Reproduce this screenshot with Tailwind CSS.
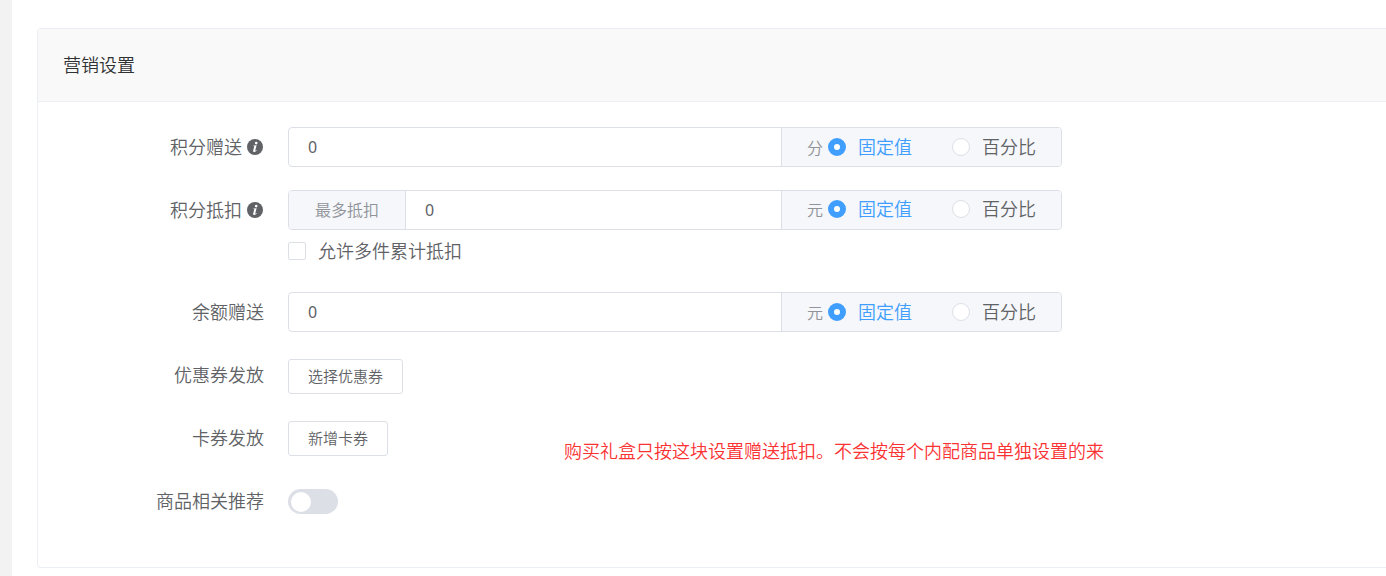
<!DOCTYPE html>
<html lang="zh-CN">
<head>
<meta charset="utf-8">
<meta name="viewport" content="width=device-width, initial-scale=1">
<title>营销设置</title>
<script src="https://cdn.jsdelivr.net/npm/@tailwindcss/browser@4"></script>
</head>
<body class="relative min-h-screen overflow-x-hidden bg-white pb-2 font-['Noto_Sans_CJK_SC',sans-serif] text-[18px] leading-[38px] font-[350] text-[#606266] flex">
<aside class="w-3 shrink-0 -mb-2 bg-[#f2f2f2]"></aside>
<main class="grow pt-7 pl-[25px]">
  <section class="rounded-l border border-r-0 border-[#ebeef5]">
    <header class="border-b border-[#ebeef5] bg-[#f9f9f9] px-[25px] pt-4 pb-[18px] text-[#303133]"><h2>营销设置</h2></header>
    <form class="flex flex-col gap-[23px] pt-[25px] pb-[46px]">

      <div class="flex">
        <label for="points" class="flex h-10 w-[226px] shrink-0 items-center justify-end gap-[5px] pr-px pb-0.5">积分赠送
          <svg class="mt-0.5 size-4" viewBox="0 0 16 16"><circle cx="8" cy="8" r="8" fill="#606266"/><circle cx="9.2" cy="4.1" r="1.3" fill="#fff"/><path d="M5.9 6.7 9.6 6.2 8.3 11.2q-.1.7.4.5l.8-.8.4.4q-1.3 1.8-2.8 1.7-1.3-.1-.9-1.6l1-3.8q.1-.5-.3-.5h-1z" fill="#fff"/></svg>
        </label>
        <div class="ml-6 flex h-10 w-full max-w-[774px] overflow-hidden rounded border border-[#dcdfe6]">
          <input id="points" type="text" value="0" class="min-w-0 grow px-[19px] font-['Noto_Sans',sans-serif] text-[16px] font-normal outline-none">
          <div class="flex shrink-0 items-center border-l border-[#dcdfe6] bg-[#f5f7fa] px-[25px] text-[16px] text-[#909399]">
            <span class="mr-[5px]">分</span>
            <label class="mr-10 flex items-center gap-3 pb-0.5 text-[18px] text-[#409eff]"><input type="radio" name="points-type" checked class="mt-0.5 size-[18px] appearance-none rounded-full border border-[#dcdfe6] bg-white checked:border-[6px] checked:border-[#409eff]">固定值</label>
            <label class="flex items-center gap-3 pb-0.5 text-[18px] text-[#606266]"><input type="radio" name="points-type" class="mt-0.5 size-[18px] appearance-none rounded-full border border-[#dcdfe6] bg-white checked:border-[6px] checked:border-[#409eff]">百分比</label>
          </div>
        </div>
      </div>

      <div class="flex">
        <label for="deduct" class="flex h-10 w-[226px] shrink-0 items-center justify-end gap-[5px] pr-px pb-0.5">积分抵扣
          <svg class="mt-0.5 size-4" viewBox="0 0 16 16"><circle cx="8" cy="8" r="8" fill="#606266"/><circle cx="9.2" cy="4.1" r="1.3" fill="#fff"/><path d="M5.9 6.7 9.6 6.2 8.3 11.2q-.1.7.4.5l.8-.8.4.4q-1.3 1.8-2.8 1.7-1.3-.1-.9-1.6l1-3.8q.1-.5-.3-.5h-1z" fill="#fff"/></svg>
        </label>
        <div class="ml-6 w-full max-w-[774px]">
          <div class="flex h-10 overflow-hidden rounded border border-[#dcdfe6]">
            <span class="flex shrink-0 items-center border-r border-[#dcdfe6] bg-[#f5f7fa] px-[26px] pb-0.5 text-[16px] text-[#909399]">最多抵扣</span>
            <input id="deduct" type="text" value="0" class="min-w-0 grow px-[19px] font-['Noto_Sans',sans-serif] text-[16px] font-normal outline-none">
            <div class="flex shrink-0 items-center border-l border-[#dcdfe6] bg-[#f5f7fa] px-[25px] pb-0.5 text-[16px] text-[#909399]">
              <span class="mr-[5px]">元</span>
              <label class="mr-10 flex items-center gap-3 pb-0.5 text-[18px] text-[#409eff]"><input type="radio" name="deduct-type" checked class="mt-0.5 size-[18px] appearance-none rounded-full border border-[#dcdfe6] bg-white checked:border-[6px] checked:border-[#409eff]">固定值</label>
              <label class="flex items-center gap-3 pb-0.5 text-[18px] text-[#606266]"><input type="radio" name="deduct-type" class="mt-0.5 size-[18px] appearance-none rounded-full border border-[#dcdfe6] bg-white checked:border-[6px] checked:border-[#409eff]">百分比</label>
            </div>
          </div>
          <label class="flex h-[39px] w-fit items-center gap-3 pt-px"><input type="checkbox" class="mt-px size-[18px] appearance-none rounded-[2px] border border-[#dcdfe6] bg-white checked:border-[#409eff] checked:bg-[#409eff]">允许多件累计抵扣</label>
        </div>
      </div>

      <div class="flex">
        <label for="balance" class="w-[226px] shrink-0 text-right">余额赠送</label>
        <div class="ml-6 flex h-10 w-full max-w-[774px] overflow-hidden rounded border border-[#dcdfe6]">
          <input id="balance" type="text" value="0" class="min-w-0 grow px-[19px] font-['Noto_Sans',sans-serif] text-[16px] font-normal outline-none">
          <div class="flex shrink-0 items-center border-l border-[#dcdfe6] bg-[#f5f7fa] px-[25px] text-[16px] text-[#909399]">
            <span class="mr-[5px]">元</span>
            <label class="mr-10 flex items-center gap-3 pb-0.5 text-[18px] text-[#409eff]"><input type="radio" name="balance-type" checked class="mt-0.5 size-[18px] appearance-none rounded-full border border-[#dcdfe6] bg-white checked:border-[6px] checked:border-[#409eff]">固定值</label>
            <label class="flex items-center gap-3 pb-0.5 text-[18px] text-[#606266]"><input type="radio" name="balance-type" class="mt-0.5 size-[18px] appearance-none rounded-full border border-[#dcdfe6] bg-white checked:border-[6px] checked:border-[#409eff]">百分比</label>
          </div>
        </div>
      </div>

      <div class="flex h-10">
        <label for="coupon" class="w-[226px] shrink-0 text-right">优惠券发放</label>
        <div class="ml-6 flex items-start pt-1"><button id="coupon" type="button" class="h-[35px] rounded-[3px] border border-[#dcdfe6] bg-white px-[19px] pb-0.5 text-[15px] leading-none">选择优惠券</button></div>
      </div>

      <div class="flex h-10">
        <label for="card" class="w-[226px] shrink-0 text-right">卡券发放</label>
        <div class="ml-6 flex items-start pt-[3px]"><button id="card" type="button" class="h-[35px] rounded-[3px] border border-[#dcdfe6] bg-white px-[19px] pb-0.5 text-[15px] leading-none">新增卡券</button></div>
      </div>

      <div class="flex h-10">
        <label for="related" class="w-[226px] shrink-0 text-right">商品相关推荐</label>
        <div class="ml-6 flex items-start pt-2"><input id="related" type="checkbox" role="switch" class="h-[25px] w-[50px] appearance-none rounded-full bg-[#dcdfe6] p-[3px] before:block before:size-5 before:rounded-full before:bg-white checked:bg-[#409eff] checked:before:ml-6"></div>
      </div>
    </form>
  </section>
</main>
<p class="absolute top-[431px] left-[564px] whitespace-nowrap text-[#fa3232]">购买礼盒只按这块设置赠送抵扣。不会按每个内配商品单独设置的来</p>
</body>
</html>
